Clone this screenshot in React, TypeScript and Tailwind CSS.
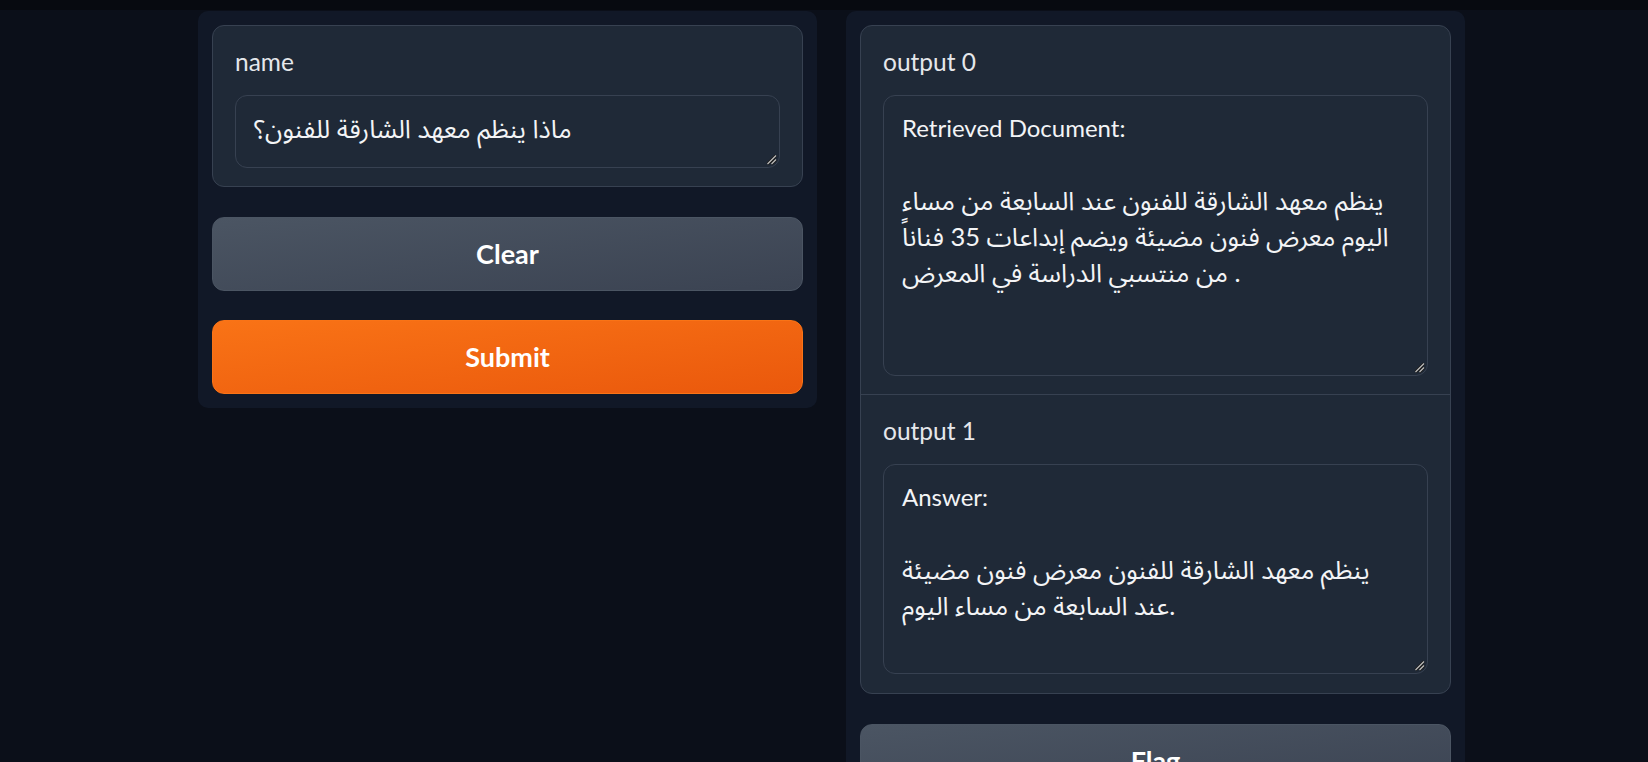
import React from "react";

function Resizer() {
  return (
    <svg
      className="absolute right-[2px] bottom-[2px]"
      width="11"
      height="11"
      viewBox="0 0 11 11"
    >
      <line x1="1.5" y1="10" x2="10" y2="1.5" stroke="#1a1a1a" strokeWidth="3" />
      <line x1="1.5" y1="10" x2="10" y2="1.5" stroke="#bdbdbd" strokeWidth="1.2" />
      <line x1="5.5" y1="10" x2="10" y2="5.5" stroke="#1a1a1a" strokeWidth="3" />
      <line x1="5.5" y1="10" x2="10" y2="5.5" stroke="#bdbdbd" strokeWidth="1.2" />
    </svg>
  );
}

const isArabic = (s: string) => /[\u0600-\u06FF]/.test(s);

function Area({ h, lines }: { h: string; lines: string[] }) {
  return (
    <div
      className={`relative w-full ${h} rounded-[12px] border border-[#374151] bg-[#1f2937] px-[18px] py-[14px] text-[24px] leading-[36px] text-[#f3f4f6]`}
    >
      {lines.map((l, i) => (
        <div
          key={i}
          className={
            isArabic(l)
              ? "h-[36px] whitespace-pre text-[25.5px] leading-[36px]"
              : "h-[36px] whitespace-pre"
          }
        >
          {l}
        </div>
      ))}
      <Resizer />
    </div>
  );
}

function Label({ children }: { children: React.ReactNode }) {
  return (
    <div className="mb-[15px] text-[24.5px] leading-[36px] text-[#e5e7eb]">{children}</div>
  );
}

function Btn({ children, primary }: { children: React.ReactNode; primary?: boolean }) {
  return (
    <div
      className={
        primary
          ? "flex h-[74px] w-full shrink-0 items-center justify-center rounded-[12px] border border-[#f97316] bg-gradient-to-br from-[#f97316] to-[#ea580c] text-[27px] font-bold text-white"
          : "flex h-[74px] w-full shrink-0 items-center justify-center rounded-[12px] border border-[#4b5563] bg-gradient-to-br from-[#4b5563] to-[#3b4352] text-[27px] font-bold text-white"
      }
    >
      {children}
    </div>
  );
}

export default function App() {
  return (
    <div className="h-[762px] overflow-hidden bg-[#0b0f19] font-['Lato','Noto_Sans_Arabic','DejaVu_Sans',sans-serif]">
      <div className="h-[10px] bg-[#070a10]" />
      <div className="flex items-start gap-[29px] pl-[198px] pt-[1px]">
        {/* left column */}
        <div className="flex w-[619px] flex-col rounded-[10px] bg-[#111827] p-[14px]">
          <div className="rounded-[12px] border border-[#374151] bg-[#1f2937] px-[22px] pt-[18px] pb-[18px]">
            <Label>name</Label>
            <Area h="h-[73px]" lines={["ماذا ينظم معهد الشارقة للفنون؟"]} />
          </div>
          <div className="mt-[30px]">
            <Btn>Clear</Btn>
          </div>
          <div className="mt-[29px]">
            <Btn primary>Submit</Btn>
          </div>
        </div>
        {/* right column */}
        <div className="flex h-[800px] w-[619px] flex-col rounded-[10px] bg-[#111827] p-[14px]">
          <div className="rounded-[12px] border border-[#374151] bg-[#1f2937]">
            <div className="border-b border-[#374151] px-[22px] pt-[18px] pb-[18px]">
              <Label>output 0</Label>
              <Area
                h="h-[281px]"
                lines={[
                  "Retrieved Document:",
                  "",
                  "ينظم معهد الشارقة للفنون عند السابعة من مساء",
                  "اليوم معرض فنون مضيئة ويضم إبداعات 35 فناناً",
                  "من منتسبي الدراسة في المعرض .",
                ]}
              />
            </div>
            <div className="px-[22px] pt-[18px] pb-[19px]">
              <Label>output 1</Label>
              <Area
                h="h-[210px]"
                lines={[
                  "Answer:",
                  "",
                  "ينظم معهد الشارقة للفنون معرض فنون مضيئة",
                  "عند السابعة من مساء اليوم.",
                ]}
              />
            </div>
          </div>
          <div className="mt-[30px]">
            <Btn>Flag</Btn>
          </div>
        </div>
      </div>
    </div>
  );
}
